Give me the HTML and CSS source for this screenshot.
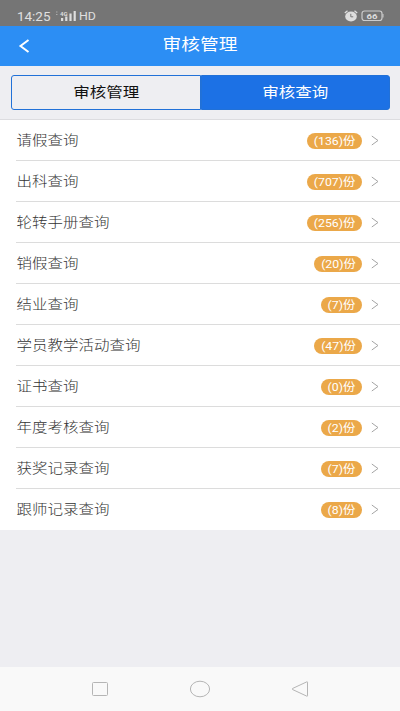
FILE: index.html
```html
<!DOCTYPE html>
<html lang="zh-CN">
<head>
<meta charset="utf-8">
<title>审核管理</title>
<link rel="stylesheet" href="styles.css">
</head>
<body>
<div class="status">
  <span class="time">14:25</span>
  <svg class="signal" width="22" height="12" viewBox="0 0 22 12"><path d="M1 2h1.500M1 4.500h1.500" stroke="#aaa" stroke-width="1"/><path d="M6 8h2.200v3H6zM10.200 6.500h2.200V11h-2.200zM14.400 3.500h2.200V11h-2.200zM18.600 1h2.200v10h-2.200z" fill="#ddd"/><text x="5" y="5.500" class="net">4G</text></svg>
  <span class="hd">HD</span>
  <svg class="alarm" width="14" height="12" viewBox="0 0 14 12"><ellipse cx="7" cy="6.500" rx="5.800" ry="5" fill="#ddd"/><path d="M.8 3 3.500.8M13.200 3 10.500.8" stroke="#ddd" stroke-width="1.300"/><path d="M6.800 3.800v3h2.400" stroke="#777" fill="none"/></svg>
  <svg class="battery" width="23" height="12" viewBox="0 0 23 12"><rect x="1" y="1" width="20" height="9.500" rx="2.500" fill="none" stroke="#ccc" stroke-width="1.200"/><path d="M22 4v3.500" stroke="#ccc"/><text x="5.500" y="8.700" class="level" textLength="11" lengthAdjust="spacingAndGlyphs">66</text></svg>
</div>
<header class="header">
  <svg class="back" width="12" height="16" viewBox="0 0 12 16"><path d="M10.500 2 2.500 8l8 6" fill="none" stroke="#fff" stroke-width="2"/></svg>
  <h1><span class="wide">审核管理</span></h1>
</header>
<nav class="tabs">
  <div class="tab"><span class="wide">审核管理</span></div>
  <div class="tab active"><span class="wide">审核查询</span></div>
</nav>
<main class="list">
  <div class="row"><span class="label">请假查询</span><span class="badge w3"><span>(136)份</span></span><svg class="arrow" viewBox="0 0 8 11"><path d="M.8 1 7 5.500.8 10"/></svg></div>
  <div class="row"><span class="label">出科查询</span><span class="badge w3"><span>(707)份</span></span><svg class="arrow" viewBox="0 0 8 11"><path d="M.8 1 7 5.500.8 10"/></svg></div>
  <div class="row"><span class="label">轮转手册查询</span><span class="badge w3"><span>(256)份</span></span><svg class="arrow" viewBox="0 0 8 11"><path d="M.8 1 7 5.500.8 10"/></svg></div>
  <div class="row"><span class="label">销假查询</span><span class="badge w2"><span>(20)份</span></span><svg class="arrow" viewBox="0 0 8 11"><path d="M.8 1 7 5.500.8 10"/></svg></div>
  <div class="row"><span class="label">结业查询</span><span class="badge"><span>(7)份</span></span><svg class="arrow" viewBox="0 0 8 11"><path d="M.8 1 7 5.500.8 10"/></svg></div>
  <div class="row"><span class="label">学员教学活动查询</span><span class="badge w2"><span>(47)份</span></span><svg class="arrow" viewBox="0 0 8 11"><path d="M.8 1 7 5.500.8 10"/></svg></div>
  <div class="row"><span class="label">证书查询</span><span class="badge"><span>(0)份</span></span><svg class="arrow" viewBox="0 0 8 11"><path d="M.8 1 7 5.500.8 10"/></svg></div>
  <div class="row"><span class="label">年度考核查询</span><span class="badge"><span>(2)份</span></span><svg class="arrow" viewBox="0 0 8 11"><path d="M.8 1 7 5.500.8 10"/></svg></div>
  <div class="row"><span class="label">获奖记录查询</span><span class="badge"><span>(7)份</span></span><svg class="arrow" viewBox="0 0 8 11"><path d="M.8 1 7 5.500.8 10"/></svg></div>
  <div class="row"><span class="label">跟师记录查询</span><span class="badge"><span>(8)份</span></span><svg class="arrow" viewBox="0 0 8 11"><path d="M.8 1 7 5.500.8 10"/></svg></div>
</main>
<footer class="navbar">
  <svg width="22" height="18" viewBox="0 0 22 18"><rect x="3.500" y="2.500" width="15" height="13" rx="1"/></svg>
  <svg width="22" height="18" viewBox="0 0 22 18"><ellipse cx="11" cy="9" rx="9.600" ry="7.800"/></svg>
  <svg width="22" height="18" viewBox="0 0 22 18"><path d="M18.500 2.200v13.600q0 .6-.8.300L3.500 9.500q-.8-.5 0-1L17.700 1.900q.8-.3.800.3z"/></svg>
</footer>
</body>
</html>
```

FILE: styles.css
```css
* { box-sizing: border-box; }
body {
  margin: 0;
  height: 711px;
  display: flex;
  flex-direction: column;
  overflow: hidden;
  background: #eeeef2;
  font-family: Roboto, "Noto Sans CJK SC", sans-serif;
}
svg { display: block; flex: none; }
.status {
  height: 26px;
  flex: none;
  display: flex;
  align-items: center;
  padding: 7px 16px 0 17px;
  background: #757575;
  color: #e0e0e0;
}
.time { width: 38px; font-size: 12px; line-height: 14px; white-space: nowrap; }
.time, .hd { transform: scaleX(1.12); transform-origin: left center; }
.signal { margin-top: -1px; }
.hd { margin-left: 2px; font-size: 11px; line-height: 14px; }
.net { font: bold 6px Roboto, sans-serif; fill: #ddd; }
.alarm { margin-left: auto; margin-right: 3px; margin-top: -1px; }
.battery { margin-top: -1px; }
.level { font: bold 8px Roboto, sans-serif; fill: #ddd; }
.header {
  height: 40px;
  flex: none;
  display: grid;
  grid-template-columns: 36px 1fr 36px;
  align-items: center;
  background: #2c8ef4;
  color: #fff;
}
.back { margin-left: 18px; }
.header h1 { margin: 0; padding-bottom: 3px; text-align: center; font-size: 16px; line-height: 24px; font-weight: 400; }
.wide { display: inline-block; transform: scaleX(1.17); }
.tabs {
  height: 54px;
  flex: none;
  display: flex;
  padding: 9px 10px 9px 11px;
  border-bottom: 1px solid #dcdce0;
}
.tab {
  flex: 1;
  border: 1px solid #2171d8;
  border-radius: 3px 0 0 3px;
  text-align: center;
  font-size: 14.100px;
  line-height: 33px;
  color: #111;
}
.active { background: #1c71e5; color: #fff; border-radius: 0 3px 3px 0; }
.list { flex: none; background: #fff; }
.row {
  height: 40.990px;
  margin-left: 16px;
  padding-right: 21px;
  display: flex;
  align-items: center;
  border-bottom: 1px solid #dcdcdc;
}
.row:last-child { border-color: transparent; }
.label {
  padding-top: 2px;
  font-size: 13.300px;
  font-weight: 300;
  line-height: 20px;
  color: #333;
  white-space: nowrap;
  transform: translateX(.5px) scaleX(1.165);
  transform-origin: left center;
}
.badge {
  width: 41.500px;
  height: 15.500px;
  margin: 2px 9px 0 auto;
  display: flex;
  justify-content: center;
  border-radius: 8px;
  background: #eba849;
  color: #fff;
  font-size: 11px;
  line-height: 17px;
  white-space: nowrap;
}
.badge span { transform: scaleX(1.12); }
.w2 { width: 48px; }
.w3 { width: 55px; }
.arrow { width: 8px; height: 11px; margin-top: 2px; fill: none; stroke: #a5a5a5; }
.navbar {
  height: 44px;
  flex: none;
  margin-top: auto;
  display: flex;
  justify-content: space-between;
  align-items: center;
  padding: 0 89px;
  background: #f9f9f9;
}
.navbar svg { fill: none; stroke: #b5b5b5; stroke-width: 1; }
```
